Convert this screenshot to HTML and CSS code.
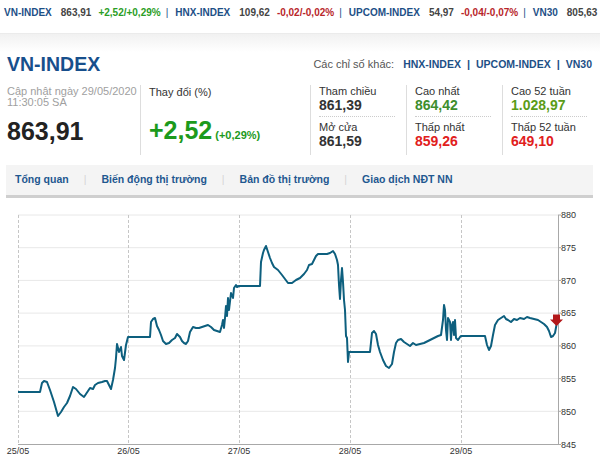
FILE: index.html
```html
<!DOCTYPE html>
<html lang="vi">
<head>
<meta charset="utf-8">
<title>VN-INDEX</title>
<link rel="stylesheet" href="styles.css">
</head>
<body>
<div class="ticker">
  <span class="n">VN-INDEX</span><span class="v">863,91</span><span class="c up">+2,52/+0,29%</span><span class="sep">|</span>
  <span class="n">HNX-INDEX</span><span class="v">109,62</span><span class="c down">-0,02/-0,02%</span><span class="sep">|</span>
  <span class="n">UPCOM-INDEX</span><span class="v">54,97</span><span class="c down">-0,04/-0,07%</span><span class="sep">|</span>
  <span class="n">VN30</span><span class="v">805,63</span>
</div>
<div class="head">
  <h1 class="title">VN-INDEX</h1>
  <div class="others">Các chỉ số khác: <a>HNX-INDEX</a><span class="bar">|</span><a>UPCOM-INDEX</a><span class="bar">|</span><a>VN30</a></div>
</div>
<div class="summary">
  <div class="col-main">
    <div class="upd">Cập nhật ngày 29/05/2020<br>11:30:05 SA</div>
    <div class="big">863,91</div>
  </div>
  <div class="col-chg">
    <div class="lbl">Thay đổi (%)</div>
    <div class="big green">+2,52<span class="pct">(+0,29%)</span></div>
  </div>
  <div class="stats">
    <div class="stat">
      <div class="cell"><div class="lbl">Tham chiều</div><div class="val">861,39</div></div>
      <div class="cell last"><div class="lbl">Mở cửa</div><div class="val">861,59</div></div>
    </div>
    <div class="stat">
      <div class="cell"><div class="lbl">Cao nhất</div><div class="val g1">864,42</div></div>
      <div class="cell last"><div class="lbl">Thấp nhất</div><div class="val red">859,26</div></div>
    </div>
    <div class="stat">
      <div class="cell"><div class="lbl">Cao 52 tuần</div><div class="val g2">1.028,97</div></div>
      <div class="cell last"><div class="lbl">Thấp 52 tuần</div><div class="val red">649,10</div></div>
    </div>
  </div>
</div>
<nav class="tabs">
  <a class="first">Tổng quan</a><span class="tsep">|</span>
  <a>Biến động thị trường</a><span class="tsep">|</span>
  <a>Bản đồ thị trường</a><span class="tsep">|</span>
  <a>Giao dịch NĐT NN</a>
</nav>
<svg class="chart" width="600" height="266" viewBox="0 198 600 266" xmlns="http://www.w3.org/2000/svg">
  <g class="hgrid">
    <line x1="18" y1="215" x2="558" y2="215"/>
    <line x1="18" y1="247.7" x2="558" y2="247.7"/>
    <line x1="18" y1="280.4" x2="558" y2="280.4"/>
    <line x1="18" y1="313.1" x2="558" y2="313.1"/>
    <line x1="18" y1="345.9" x2="558" y2="345.9"/>
    <line x1="18" y1="378.6" x2="558" y2="378.6"/>
    <line x1="18" y1="411.3" x2="558" y2="411.3"/>
  </g>
  <g class="vgrid">
    <line x1="18.5" y1="215" x2="18.5" y2="444"/>
    <line x1="128.5" y1="215" x2="128.5" y2="444"/>
    <line x1="239.5" y1="215" x2="239.5" y2="444"/>
    <line x1="350.5" y1="215" x2="350.5" y2="444"/>
    <line x1="461.5" y1="215" x2="461.5" y2="444"/>
  </g>
  <g class="axis">
    <line x1="18" y1="444.5" x2="558" y2="444.5"/>
    <line x1="558.5" y1="215" x2="558.5" y2="445"/>
    <line x1="558" y1="215" x2="561" y2="215"/>
    <line x1="558" y1="247.7" x2="561" y2="247.7"/>
    <line x1="558" y1="280.4" x2="561" y2="280.4"/>
    <line x1="558" y1="313.1" x2="561" y2="313.1"/>
    <line x1="558" y1="345.9" x2="561" y2="345.9"/>
    <line x1="558" y1="378.6" x2="561" y2="378.6"/>
    <line x1="558" y1="411.3" x2="561" y2="411.3"/>
    <line x1="558" y1="444.5" x2="561" y2="444.5"/>
  </g>
  <g class="ylab">
    <text x="561" y="218">880</text>
    <text x="561" y="251">875</text>
    <text x="561" y="283.5">870</text>
    <text x="561" y="316">865</text>
    <text x="561" y="349">860</text>
    <text x="561" y="382">855</text>
    <text x="561" y="414.5">850</text>
    <text x="561" y="447.5">845</text>
  </g>
  <g class="xlab">
    <text x="18" y="454">25/05</text>
    <text x="128.5" y="454">26/05</text>
    <text x="239" y="454">27/05</text>
    <text x="350" y="454">28/05</text>
    <text x="461" y="454">29/05</text>
  </g>
  <path class="line" d="M18,392 L40,392 L42,383 L44,381 L47,382 L50,390 L54,402 L58,416 L61,412 L64,407 L67,403 L70,396 L73,387 L76,389 L80,394 L84,397 L88,391 L90,388 L93,389 L95,385 L98,383 L102,382 L105,381 L107,381 L109,385 L111,389 L113,380 L115,368 L116,358 L117,344 L119,352 L121,347 L122,356 L124,360 L126,345 L128,337 L150,337 L151,322 L153,319 L155,318 L157,326 L159,330 L161,335 L163,341 L166,344 L169,343 L172,340 L175,338 L177,334 L180,337 L182,341 L184,343 L186,344 L188,341 L190,332 L193,327 L196,328 L199,328 L202,327 L205,326 L208,325 L211,327 L214,330 L217,331 L220,332 L222,325 L223,320 L224,328 L225,318 L226,306 L227,316 L228,298 L229,310 L231,293 L233,298 L234,288 L236,285 L237,287 L239,286 L260,286 L261,262 L263,253 L264,250 L266,246 L268,252 L270,258 L272,263 L274,267 L278,270 L282,275 L285,279 L288,283 L292,283 L296,280 L300,278 L304,274 L307,270 L309,265 L312,264 L314,260 L316,256 L318,254 L322,254 L327,254 L330,253 L333,251 L335,254 L337,260 L338,265 L339,285 L340,299 L341,280 L342,268 L343,282 L344,300 L345,310 L346,336 L347,338 L348,362 L349,352 L370,352 L372,333 L374,331 L376,334 L378,345 L380,352 L383,360 L386,366 L389,368 L392,364 L394,352 L396,343 L398,340 L401,339 L404,342 L407,344 L410,346 L413,343 L416,345 L420,344 L424,343 L428,341 L432,339 L436,337 L438,336 L441,335 L443,320 L444,305 L445,310 L446,330 L447,340 L448,318 L450,322 L451,340 L452,325 L453,322 L454,335 L455,320 L456,338 L458,340 L460,337 L461,336 L485,336 L487,345 L489,350 L491,346 L493,335 L495,325 L498,320 L501,318 L504,316 L506,319 L508,320 L511,322 L514,319 L517,320 L520,318 L524,319 L527,317 L530,318 L534,319 L538,320 L541,322 L544,324 L547,327 L549,331 L551,337 L553,336 L555,333 L557,322"/>
  <path class="marker" d="M553,314.5 h7 v5 h3 l-6.5,6.5 l-6.5,-6.5 h3 z"/>
</svg>
</body>
</html>
```

FILE: styles.css
```css
* { box-sizing: border-box; }
html, body { margin: 0; padding: 0; background: #fff; }
body {
  width: 600px;
  height: 464px;
  overflow: hidden;
  font-family: "Liberation Sans", Arial, sans-serif;
  color: #333;
}
a { text-decoration: none; cursor: pointer; }

/* ticker */
.ticker {
  display: flex;
  white-space: nowrap;
  overflow: hidden;
  height: 34px;
  padding: 0 0 0 4px;
  line-height: 26px;
  font-size: 10px;
  font-weight: bold;
  border-bottom: 1px solid #ebebeb;
}
.ticker .n { color: #1d4f86; margin-right: 9px; }
.ticker .v { color: #444; margin-right: 7px; }
.ticker .c { margin-right: 5px; }
.ticker .sep { color: #1d4f86; margin-right: 7px; font-weight: normal; }
.up { color: #2a9d25; }
.down { color: #b8262a; }

/* header */
.head {
  display: flex;
  justify-content: space-between;
  align-items: center;
  padding: 19px 8px 0 7px;
  background: linear-gradient(#f1f1f1, #fff 18px);
}
.title {
  margin: 0;
  font-size: 19.5px;
  line-height: 22px;
  font-weight: bold;
  color: #174f8c;
}
.others {
  font-size: 11px;
  color: #555;
  line-height: 22px;
}
.others a {
  color: #1d4f86;
  font-weight: bold;
  font-size: 10.5px;
}
.others a:first-child { margin-left: 6px; }
.others .bar { color: #1d4f86; margin: 0 6px; font-size: 11px; font-weight: bold; }

/* summary */
.summary {
  display: flex;
  margin-top: 10px;
  height: 70px;
}
.col-main {
  width: 140px;
  padding-left: 7px;
}
.upd {
  font-size: 11px;
  line-height: 11px;
  color: #a0a0a0;
  padding-top: 1px;
}
.big {
  font-size: 25px;
  line-height: 28px;
  font-weight: bold;
  color: #222;
  margin-top: 9px;
}
.col-chg {
  width: 170px;
  border-left: 1px solid #ddd;
  padding-left: 8px;
}
.col-chg .lbl {
  font-size: 11px;
  line-height: 12px;
  padding-top: 1px;
  color: #333;
}
.col-chg .big { margin-top: 18px; }
.green { color: #1c9a1c; }
.pct {
  font-size: 11px;
  margin-left: 3px;
  color: #1c9a1c;
}
.stats { display: flex; }
.stat {
  width: 96px;
  border-left: 1px solid #ddd;
  padding-left: 8px;
}
.cell {
  width: 76px;
  padding-bottom: 4px;
  border-bottom: 1px dotted #ccc;
}
.cell.last {
  border-bottom: none;
  padding-top: 4px;
}
.stat .lbl {
  font-size: 11px;
  line-height: 13px;
  color: #333;
}
.val {
  font-size: 14px;
  line-height: 14px;
  font-weight: bold;
  color: #333;
}
.g1 { color: #3d8e2c; }
.g2 { color: #5a9c18; }
.red { color: #e1201c; }

/* tabs */
.tabs {
  display: flex;
  align-items: center;
  margin: 10px 7px 0 6px;
  height: 33px;
  padding: 0 0 3px 9px;
  background: #f4f4f4;
  border-bottom: 3px solid #cfcfcf;
  font-size: 10.5px;
  font-weight: bold;
  white-space: nowrap;
}
.tabs a { color: #1f5890; }
.tsep {
  color: #d4d4d4;
  font-weight: normal;
  margin: 0 15px;
}

/* chart */
.chart { display: block; }
.hgrid line { stroke: #e8e8e8; stroke-width: 1; }
.vgrid line { stroke: #c6c6c6; stroke-width: 1; stroke-dasharray: 3 2; }
.axis line { stroke: #a8a8a8; stroke-width: 1; }
.ylab text, .xlab text {
  font-family: "Liberation Sans", Arial, sans-serif;
  font-size: 9px;
  fill: #333;
}
.xlab text { text-anchor: middle; }
.line {
  fill: none;
  stroke: #0d5f7e;
  stroke-width: 2;
  stroke-linejoin: round;
}
.marker { fill: #b3181a; }
```
